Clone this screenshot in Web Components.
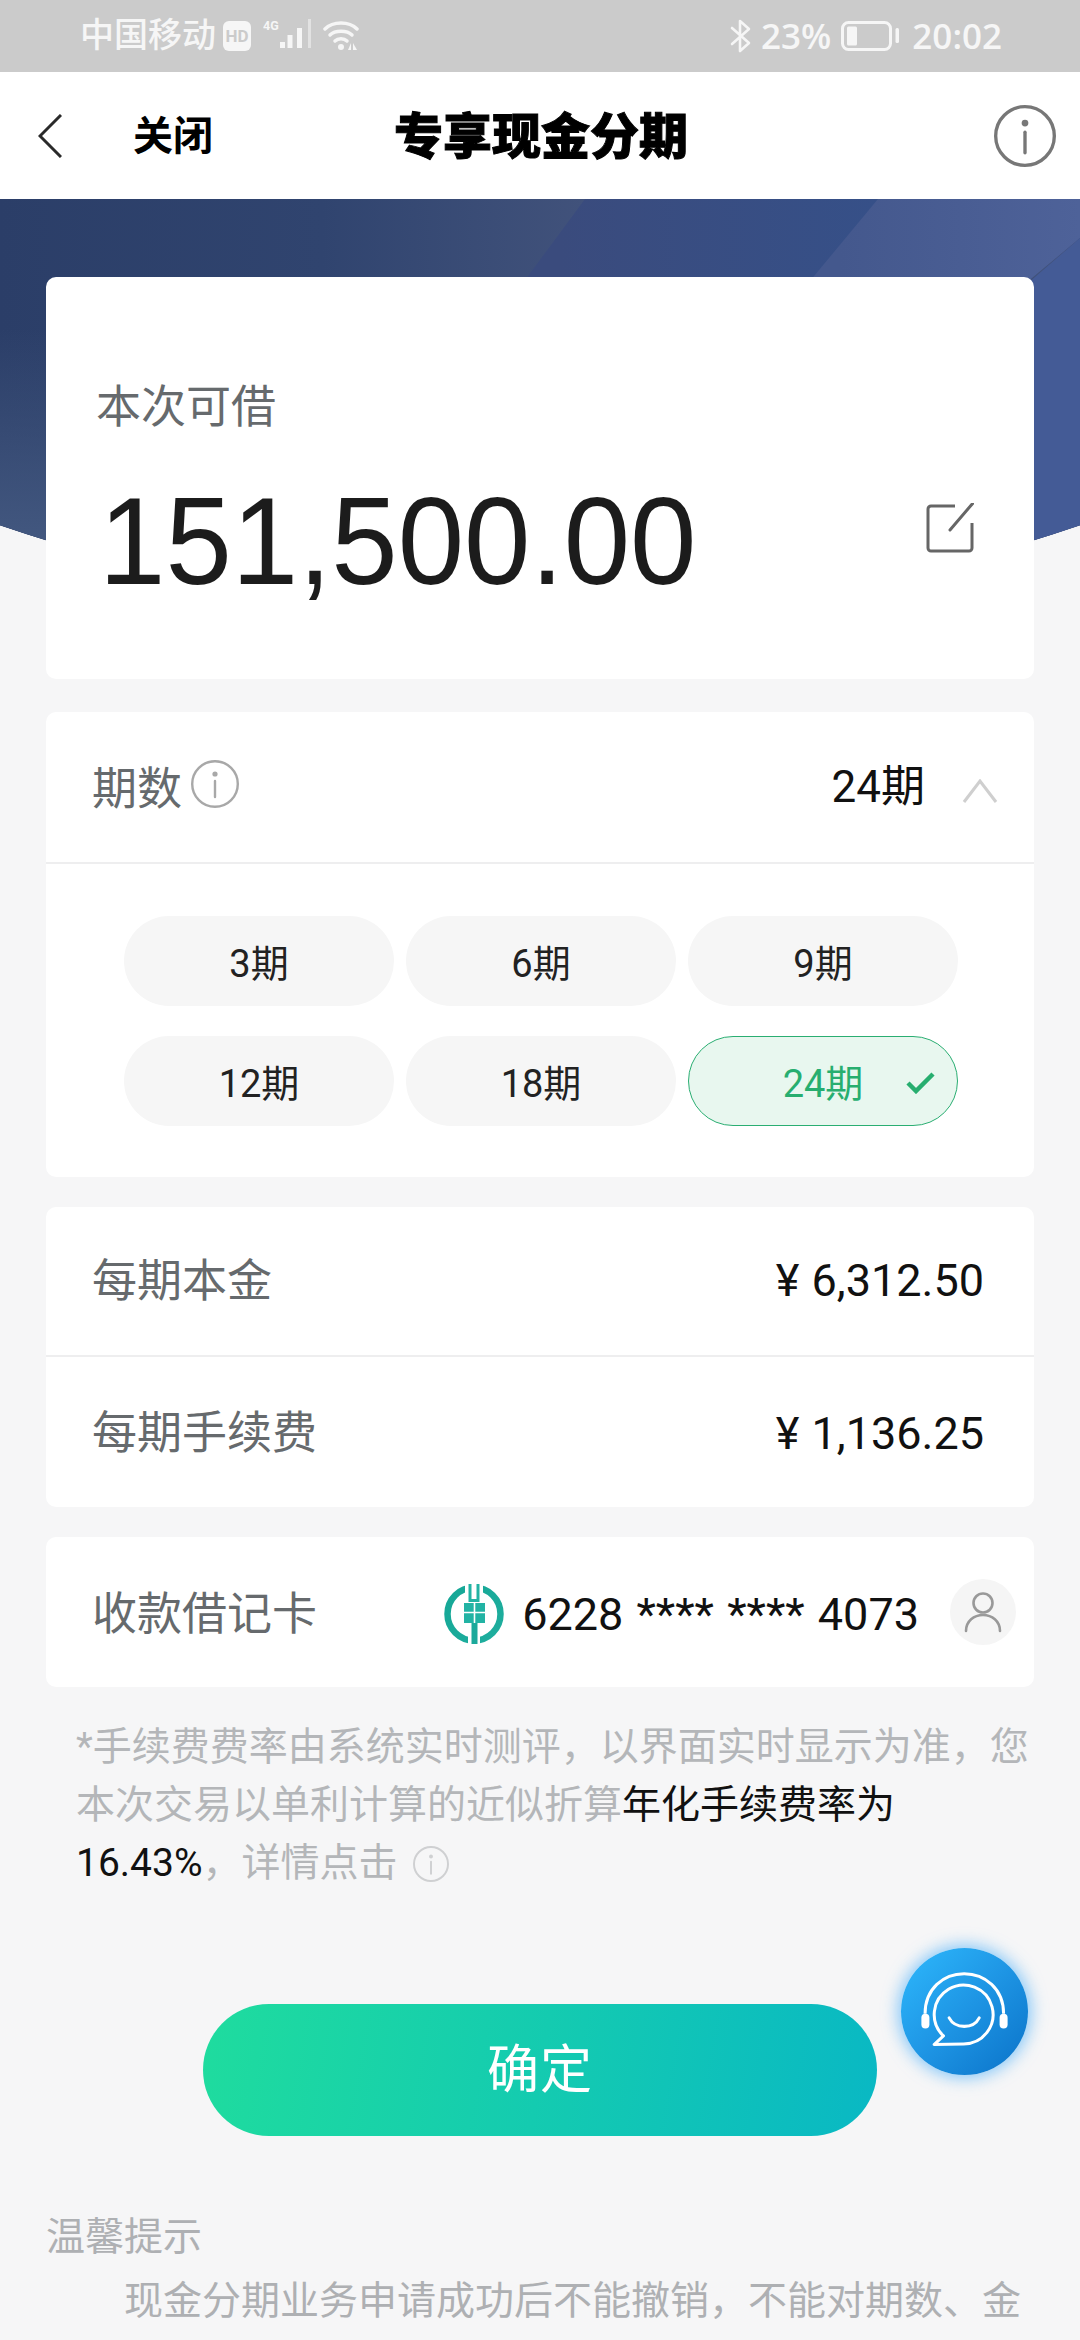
<!DOCTYPE html>
<html lang="zh-CN"><head><meta charset="utf-8"><title>专享现金分期</title>
<style>
html,body{margin:0;padding:0;background:#f6f6f7}
body{width:1080px;height:2340px;overflow:hidden;font-family:Roboto,"Noto Sans CJK SC",sans-serif}
</style></head><body>
<loan-page>
  <status-bar></status-bar>
  <nav-bar></nav-bar>
  <loan-main>
    <amount-card></amount-card>
    <term-card></term-card>
    <plain-card>
      <value-row label="每期本金" value="¥ 6,312.50" divider></value-row>
      <value-row label="每期手续费" value="¥ 1,136.25"></value-row>
    </plain-card>
    <plain-card><debit-row></debit-row></plain-card>
    <fee-note></fee-note>
    <cta-button>确定</cta-button>
    <tip-block></tip-block>
    <help-fab></help-fab>
  </loan-main>
</loan-page>
<script>
function def(name,html,init){
  customElements.define(name,class extends HTMLElement{
    constructor(){super();const r=this.attachShadow({mode:'open'});r.innerHTML=html;if(init)init(this,r);}
  });
}
const info=(s,c,w)=>`<svg width="${s}" height="${s}" viewBox="0 0 48 48" fill="none"><circle cx="24" cy="24" r="${24-w/2}" stroke="${c}" stroke-width="${w}"/><circle cx="24" cy="14" r="2.6" fill="${c}"/><path d="M24 21V37" stroke="${c}" stroke-width="${w}" stroke-linecap="round"/></svg>`;

def('loan-page',`<style>:host{display:block;width:1080px;height:2340px;overflow:hidden;position:relative;background:#f6f6f7}</style><slot></slot>`);

def('status-bar',`<style>
:host{display:flex;align-items:center;justify-content:space-between;height:72px;background:#cbcbcb;color:#f6f6f6;padding:0 78px 0 80px;box-sizing:border-box;font-family:"Noto Sans CJK SC",sans-serif;font-weight:500}
.g{display:flex;align-items:center}
.c{font-size:34px;line-height:66px;height:72px}
.n{font-family:"Open Sans",Roboto,sans-serif;font-size:35px;font-weight:600;line-height:72px}
svg{display:block;flex:none}
</style>
<div class="g"><span class="c">中国移动</span>
<svg style="margin-left:7px" width="28" height="30" viewBox="0 0 28 30"><rect width="28" height="30" rx="6" fill="#f6f6f6"/><text x="14" y="21" text-anchor="middle" font-family="Roboto,sans-serif" font-size="17" font-weight="700" fill="#cbcbcb">HD</text></svg>
<svg style="margin-left:12px" width="48" height="34" viewBox="0 0 48 34"><text x="0" y="11" font-family="Roboto,sans-serif" font-size="12.500" font-weight="700" fill="#f6f6f6">4G</text><g fill="#f6f6f6"><rect x="17" y="23" width="5" height="6"/><rect x="24.500" y="16" width="5" height="13"/><rect x="34" y="9" width="5" height="20"/><rect x="45" y="0" width="3" height="29" opacity=".55"/></g></svg>
<svg style="margin-left:12px" width="36" height="32" viewBox="0 0 36 32" fill="none" stroke="#f6f6f6" stroke-width="3.500" stroke-linecap="round"><path d="M2 9C10 1 26 1 34 9"/><path d="M7 15C12 10 24 10 29 15"/><path d="M12 21C15 18 21 18 24 21"/><circle cx="18" cy="27" r="3" fill="#f6f6f6" stroke="none"/><path d="M28 23l-3 7h3z" fill="#f6f6f6" stroke="none"/><path d="M30 23l4 7h-4z" fill="#f6f6f6" stroke="none"/></svg>
</div>
<div class="g">
<svg width="22" height="34" viewBox="0 0 22 34" fill="none" stroke="#f6f6f6" stroke-width="2.600" stroke-linejoin="round" stroke-linecap="round"><path d="M2 9L19 24L10 32V2L19 10L2 25"/></svg>
<span class="n" style="margin-left:9px">23%</span>
<svg style="margin-left:10px" width="58" height="30" viewBox="0 0 58 30"><rect x="1.500" y="1.500" width="48" height="27" rx="6" fill="none" stroke="#f6f6f6" stroke-width="3"/><rect x="6" y="5.500" width="10" height="19" rx="1.500" fill="#f6f6f6"/><rect x="54.500" y="7" width="3.500" height="15" rx="1.500" fill="#f6f6f6"/></svg>
<span class="n" style="margin-left:13px">20:02</span>
</div>`);

def('nav-bar',`<style>
:host{display:grid;grid-template-columns:1fr auto 1fr;align-items:center;height:127px;background:#fff;color:#000;font-family:"Noto Sans CJK SC",sans-serif}
.l{display:flex;align-items:center;padding-left:38px}
.close{font-size:40px;font-weight:700;margin-left:71px;line-height:1;margin-top:-6px}
.t{font-size:49px;font-weight:900;line-height:1;-webkit-text-stroke:1px #000;padding-left:2px;margin-top:-6px}
.r{justify-self:end;padding-right:24px;display:flex}
</style>
<div class="l"><svg width="24" height="44" viewBox="0 0 24 44" fill="none" stroke="#2a2a2a" stroke-width="3"><path d="M23 1L2 22L23 43"/></svg><span class="close">关闭</span></div>
<div class="t">专享现金分期</div>
<div class="r">${info(62,'#777',2.6)}</div>`);

def('loan-main',`<style>
:host{display:block;position:relative;padding:78px 46px 0}
.bg{position:absolute;left:0;top:0;width:1080px;height:420px;clip-path:circle(1668px at 540px -1252px);background:#2d4068;overflow:hidden}
.bg svg{position:absolute;left:0;top:0;display:block}
.c{position:relative}
</style>
<div class="bg"><svg width="1080" height="420" viewBox="0 0 1080 420">
<defs>
<linearGradient id="a" gradientUnits="userSpaceOnUse" x1="0" y1="0" x2="585" y2="0"><stop offset="0" stop-color="#2b3e68"/><stop offset=".55" stop-color="#30446f"/><stop offset="1" stop-color="#41527b"/></linearGradient>
<linearGradient id="b" gradientUnits="userSpaceOnUse" x1="560" y1="0" x2="878" y2="0"><stop offset="0" stop-color="#3a4b7d"/><stop offset="1" stop-color="#365088"/></linearGradient>
<linearGradient id="c" gradientUnits="userSpaceOnUse" x1="840" y1="0" x2="1080" y2="0"><stop offset="0" stop-color="#44588d"/><stop offset="1" stop-color="#4e6299"/></linearGradient>
<linearGradient id="e" gradientUnits="userSpaceOnUse" x1="0" y1="130" x2="0" y2="340"><stop offset="0" stop-color="#42577f" stop-opacity="0"/><stop offset="1" stop-color="#42577f"/></linearGradient>
</defs>
<rect width="1080" height="420" fill="url(#a)"/>
<rect x="0" y="0" width="46" height="420" fill="url(#e)"/>
<path d="M585 0L320 358V420H700L878 0Z" fill="url(#b)"/>
<path d="M878 0H1080V39L697 358H581Z" fill="url(#c)"/>
<path d="M1080 39V420H640Z" fill="#445b96"/>
</svg></div>
<div class="c"><slot></slot></div>`);

const cardCss=`background:#fff;border-radius:10px;`;

def('amount-card',`<style>
:host{display:block;${cardCss}height:402px;box-sizing:border-box;padding:100px 60px 0 53px;color:#1c1c1c}
.l{font-size:45px;line-height:60px;color:#666a6d;font-family:"Noto Sans CJK SC",sans-serif;font-weight:400;margin:-3px 0 3px -3px}
.row{display:flex;justify-content:space-between;align-items:center;margin-top:42px;height:130px}
.a{display:block;width:560px;white-space:nowrap;transform:scaleX(.955);transform-origin:0 50%;font-family:"Liberation Sans",Arial,sans-serif;font-size:125px;line-height:130px}
svg{margin-bottom:26px}
</style>
<div class="l">本次可借</div>
<div class="row"><span class="a">151,500.00</span>
<svg width="48" height="50" viewBox="0 0 48 50" fill="none" stroke="#666" stroke-width="3"><path d="M29 3H5a3 3 0 0 0-3 3V45a3 3 0 0 0 3 3H43a3 3 0 0 0 3-3V20"/><path d="M47 0L24 27" stroke-linecap="round"/></svg></div>`);

def('term-pill',`<style>
:host{display:flex;align-items:center;justify-content:center;position:relative;height:90px;box-sizing:border-box;padding-bottom:2px;border-radius:45px;background:#f6f6f6;color:#222;font-size:38px;font-family:Roboto,"Noto Sans CJK SC",sans-serif}
:host([on]){background:#e8f7ef;border:1px solid #2aae72;color:#27ae6f}
svg{display:none;position:absolute;left:217px;top:35px}
:host([on]) svg{display:block}
</style><slot></slot><svg width="30" height="22" viewBox="0 0 30 22" fill="none" stroke="#27ae6f" stroke-width="4.500"><path d="M2 11L10 19L27 2"/></svg>`);

def('term-card',`<style>
:host{display:block;${cardCss}margin-top:33px;height:465px;font-family:Roboto,"Noto Sans CJK SC",sans-serif}
.h{display:flex;align-items:center;height:150px;padding:0 36px 0 46px;border-bottom:2px solid #eeeeef}
.l{font-size:45px;color:#666a6d;line-height:1;font-family:"Noto Sans CJK SC",sans-serif;margin-top:-4px}
.i{margin-left:9px;display:flex;margin-top:-6px}
.v{margin-left:auto;font-size:44px;color:#111;line-height:1}
.ch{margin-left:37px;margin-top:8px}
.g{display:grid;grid-template-columns:repeat(3,270px);gap:30px 12px;padding:52px 0 0 78px}
</style>
<div class="h"><span class="l">期数</span><span class="i">${info(48,'#a8a8a8',2.4)}</span><span class="v">24期</span>
<svg class="ch" width="36" height="24" viewBox="0 0 36 24" fill="none" stroke="#cfcfcf" stroke-width="3"><path d="M2 23L18 2L34 23"/></svg></div>
<div class="g"><term-pill>3期</term-pill><term-pill>6期</term-pill><term-pill>9期</term-pill><term-pill>12期</term-pill><term-pill>18期</term-pill><term-pill on>24期</term-pill></div>`);

def('plain-card',`<style>:host{display:block;${cardCss}margin-top:30px}</style><slot></slot>`);

def('value-row',`<style>
:host{display:flex;align-items:center;justify-content:space-between;height:150px;box-sizing:border-box;padding:0 50px 0 46px;font-family:Roboto,"Noto Sans CJK SC",sans-serif}
:host([divider]){border-bottom:2px solid #eeeeef}
.l{font-size:45px;color:#666a6d;font-family:"Noto Sans CJK SC",sans-serif;line-height:1;margin-top:-6px}
.v{font-size:45px;word-spacing:1px;color:#111;line-height:1;margin-top:2px}
:host([divider]) .l{margin-top:-8px}
:host([divider]) .v{margin-top:-2px}
</style><span class="l"></span><span class="v"></span>`,(h,r)=>{
  queueMicrotask(()=>{r.querySelector('.l').textContent=h.getAttribute('label');r.querySelector('.v').textContent=h.getAttribute('value');});
});

def('debit-row',`<style>
:host{display:flex;align-items:center;height:150px;padding:0 18px 0 46px;font-family:Roboto,"Noto Sans CJK SC",sans-serif}
.l{font-size:45px;color:#666a6d;font-family:"Noto Sans CJK SC",sans-serif;line-height:1;margin-top:-4px}
.bank{margin-left:auto;display:block;margin-top:4px}
.n{font-size:45px;word-spacing:2px;color:#111;margin-left:18px;line-height:1;white-space:pre;margin-top:4px}
.a{margin-left:31px;width:66px;height:66px;border-radius:50%;background:#f5f5f5;display:flex}
</style><span class="l">收款借记卡</span>
<svg class="bank" width="60" height="60" viewBox="0 0 60 60" fill="none">
<defs><linearGradient id="t" x1="0" y1="0" x2="1" y2="1"><stop offset="0" stop-color="#15a796"/><stop offset="1" stop-color="#1fae9e"/></linearGradient></defs>
<circle cx="30" cy="30" r="26.500" stroke="url(#t)" stroke-width="6.500"/>
<rect x="21" y="0" width="18" height="9" fill="#fff"/><rect x="24" y="51" width="12" height="9" fill="#fff"/>
<path d="M24.500 0H27.500V15H32.500V0H35.500V18H24.500Z" fill="#22b3a4"/>
<rect x="20" y="19" width="21" height="20" fill="#22b3a4"/><path d="M20 28.500H41M30.500 19V39" stroke="#fff" stroke-width="1.600"/>
<rect x="27.500" y="39" width="6" height="21" fill="#1ca99b"/></svg>
<span class="n">6228 **** **** 4073</span>
<span class="a"><svg width="66" height="66" viewBox="0 0 66 66" fill="none" stroke="#999" stroke-width="2.600"><circle cx="33" cy="24" r="9.500"/><path d="M16 52C16 42 24 36 33 36S50 42 50 52" stroke-linecap="round"/></svg></span>`);

def('fee-note',`<style>
:host{display:block;margin-top:31px;padding-left:30px;font-size:39px;line-height:58px;color:#b4b6b9;white-space:nowrap;font-family:Roboto,"Noto Sans CJK SC",sans-serif}
b{font-weight:400;color:#111}
svg{vertical-align:-6px;margin-left:6px}
</style>*手续费费率由系统实时测评，以界面实时显示为准，您<br>本次交易以单利计算的近似折算<b>年化手续费率为</b><br><b>16.43%</b>，详情点击 ${info(36,'#cfd0d2',2.6)}`);

def('cta-button',`<style>
:host{display:flex;align-items:center;justify-content:center;width:674px;height:132px;box-sizing:border-box;padding-bottom:8px;margin:112px auto 0;border-radius:66px;background:linear-gradient(100deg,#1fdc9e 0%,#14cbb0 50%,#09b8c4 100%);color:#fff;font-size:52px;font-family:"Noto Sans CJK SC",sans-serif;line-height:1;letter-spacing:1px}
</style><slot></slot>`);

def('tip-block',`<style>
:host{display:block;margin-top:72px;color:#aeb0b3;font-family:"Noto Sans CJK SC",sans-serif;font-size:39px}
.t{line-height:50px}
.p{margin-top:10px;line-height:58px;text-indent:78px;white-space:nowrap}
</style><div class="t">温馨提示</div><div class="p">现金分期业务申请成功后不能撤销，不能对期数、金</div>`);

def('help-fab',`<style>
:host{position:absolute;left:855px;top:1671px;width:127px;height:127px;border-radius:50%;background:linear-gradient(135deg,#2eb9fd 0%,#1e95e4 50%,#0a72c8 100%);box-shadow:0 0 16px 3px rgba(40,160,250,.55);display:block}
svg{display:block}
</style><svg width="127" height="127" viewBox="63 53 380 380" fill="none" stroke="#fff" stroke-width="9"><path d="M135 250C135 175 190 130 252 130S370 175 370 250"/><path d="M190 316A88 88 0 1 1 250 340L162 342Z" stroke-linejoin="round"/><path d="M207 262C225 296 280 296 297 262" stroke-linecap="round"/><rect x="124" y="250" width="24" height="44" rx="12" fill="#fff" stroke="none"/><rect x="358" y="250" width="24" height="44" rx="12" fill="#fff" stroke="none"/></svg>`);
</script>
</body></html>
